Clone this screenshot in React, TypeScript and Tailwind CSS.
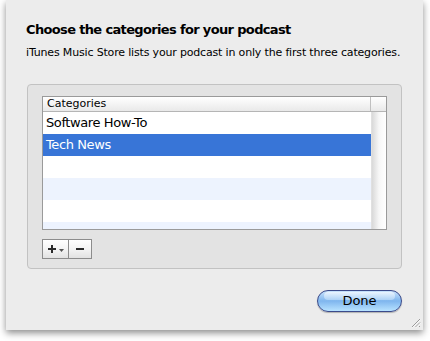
import React from "react";

export default function App() {
  const rows = ["Software How-To", "Tech News", "", "", "", ""];
  return (
    <div className="w-[430px] h-[341px] bg-white overflow-hidden" style={{ fontFamily: '"Lucida Grande", "DejaVu Sans", sans-serif' }}>
      <div className="ml-[6px] w-[417px] h-[330px] bg-[#ececec] relative shadow-[0_3px_7px_rgba(0,0,0,0.45)] flex flex-col">
        <div className="pl-[20px] pt-[22px] text-[13px] font-bold text-black leading-[16px] tracking-[-0.65px]">Choose the categories for your podcast</div>
        <div className="pl-[20px] pt-[8px] text-[11px] text-black leading-[14px] tracking-[-0.17px]">iTunes Music Store lists your podcast in only the first three categories.</div>
        <div className="mt-[24px] mx-[21px] h-[185px] bg-[#e3e3e3] border border-[#c2c2c2] rounded-[4px] px-[14px] pt-[11px] flex flex-col">
          <div className="h-[134px] border border-[#9a9a9a] bg-white flex flex-col overflow-hidden">
            <div className="h-[15px] flex border-b border-[#b5b5b5] bg-gradient-to-b from-[#ffffff] to-[#e9e9e9] shrink-0">
              <div className="flex-1 text-[11px] leading-[14px] pl-[4px] text-black border-r border-[#c0c0c0]">Categories</div>
              <div className="w-[15px]"></div>
            </div>
            <div className="flex flex-1 min-h-0">
              <div className="flex-1 flex flex-col">
                {rows.map((r, i) => (
                  <div
                    key={i}
                    className={
                      "h-[22px] shrink-0 text-[13px] leading-[22px] pl-[3px] tracking-[-0.4px] " +
                      (i === 1 ? "bg-[#3875d7] text-white" : i % 2 === 1 ? "bg-[#edf3fe] text-black" : "bg-white text-black")
                    }
                  >
                    {r}
                  </div>
                ))}
              </div>
              <div className="w-[15px] bg-gradient-to-r from-[#d9d9d9] via-[#f7f7f7] to-[#ffffff] border-l border-[#e0e0e0]"></div>
            </div>
          </div>
          <div className="mt-[9px] flex h-[20px] w-[50px] border border-[#8c8c8c] bg-gradient-to-b from-[#ffffff] via-[#f4f4f4] to-[#e2e2e2] relative">
            <div className="w-[26px] border-r border-[#8c8c8c] flex items-center justify-center gap-[2px]">
              <svg width="10" height="10" viewBox="0 0 10 10"><path d="M1 5h8M5 1v8" stroke="#2a2a2a" strokeWidth="2" /></svg>
              <svg width="5" height="4" viewBox="0 0 5 4" className="mt-[4px]"><path d="M0 0h5L2.5 3z" fill="#555" /></svg>
            </div>
            <div className="flex-1 flex items-center justify-center">
              <svg width="10" height="10" viewBox="0 0 10 10"><path d="M1 5h8" stroke="#2a2a2a" strokeWidth="2" /></svg>
            </div>
          </div>
        </div>
        <div className="flex justify-end mr-[21px] mt-[21px]">
          <div className="w-[85px] h-[22px] rounded-full border border-[#3b4a8a] bg-gradient-to-b from-[#c8e2fb] via-[#7fb6ee] to-[#b8e3ff] shadow-[0_1px_1px_rgba(0,0,0,0.25)] flex items-center justify-center text-[13px] text-black relative overflow-hidden">
            <div className="absolute top-[1px] left-[6px] right-[6px] h-[8px] rounded-full bg-gradient-to-b from-[#f4faff] to-[#b7d8f7] opacity-80"></div>
            <span className="relative">Done</span>
          </div>
        </div>
        <svg className="absolute right-[2px] bottom-[2px]" width="11" height="11" viewBox="0 0 11 11">
          <path d="M10 2L2 10M10 5.5L5.5 10M10 9L9 10" stroke="#9a9a9a" strokeWidth="1" />
          <path d="M10.6 2.6L2.6 10.6M10.6 6.1L6.1 10.6" stroke="#ffffff" strokeWidth="0.8" />
        </svg>
      </div>
    </div>
  );
}
